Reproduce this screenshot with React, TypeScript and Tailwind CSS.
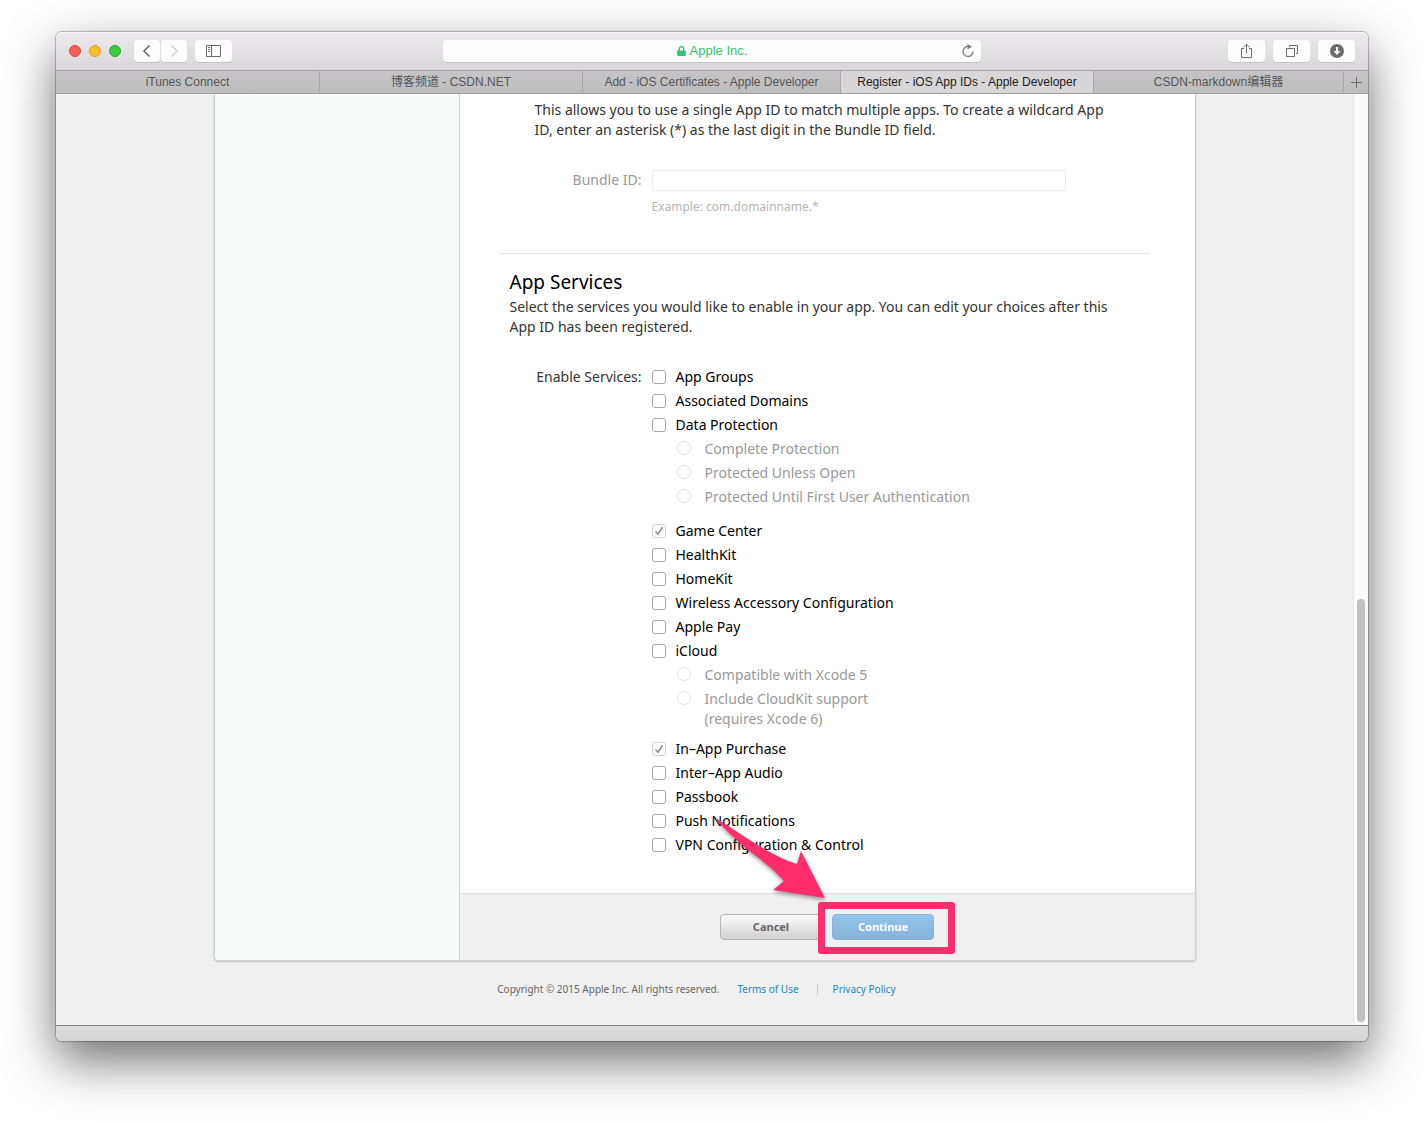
import {ReactNode} from "react";
import {FaLock} from "react-icons/fa";

interface SubOption {
  id: string;
  label: ReactNode;
}

interface Service {
  id: string;
  label: string;
  locked?: boolean;
  options?: SubOption[];
  optionsClass?: string;
}

const tabs = [
  {title: "iTunes Connect", active: false},
  {title: "博客频道 - CSDN.NET", active: false},
  {title: "Add - iOS Certificates - Apple Developer", active: false},
  {title: "Register - iOS App IDs - Apple Developer", active: true},
  {title: "CSDN-markdown编辑器", active: false},
];

const services: Service[] = [
  {id: "groups", label: "App Groups"},
  {id: "domains", label: "Associated Domains"},
  {
    id: "protection",
    label: "Data Protection",
    optionsClass: "pb-2.5",
    options: [
      {id: "complete", label: "Complete Protection"},
      {id: "unless-open", label: "Protected Unless Open"},
      {id: "until-auth", label: "Protected Until First User Authentication"},
    ],
  },
  {id: "game-center", label: "Game Center", locked: true},
  {id: "healthkit", label: "HealthKit"},
  {id: "homekit", label: "HomeKit"},
  {id: "wireless", label: "Wireless Accessory Configuration"},
  {id: "pay", label: "Apple Pay"},
  {
    id: "icloud",
    label: "iCloud",
    optionsClass: "pb-1.5",
    options: [
      {id: "xcode5", label: "Compatible with Xcode 5"},
      {
        id: "cloudkit",
        label: (
          <>
            Include CloudKit support
            <br />
            (requires Xcode 6)
          </>
        ),
      },
    ],
  },
  {id: "iap", label: "In–App Purchase", locked: true},
  {id: "audio", label: "Inter–App Audio"},
  {id: "passbook", label: "Passbook"},
  {id: "push", label: "Push Notifications"},
  {id: "vpn", label: "VPN Configuration & Control"},
];

function ToolbarButton({
  label,
  className,
  children,
}: {
  label: string;
  className: string;
  children: ReactNode;
}) {
  return (
    <button
      aria-label={label}
      className={`flex h-[22px] items-center justify-center rounded bg-[#fdfdfd] text-[#6b6b6b] shadow-[0_1px_0_#c4c3c4] ${className}`}
      type="button"
    >
      {children}
    </button>
  );
}

function Toolbar() {
  return (
    <div className="grid h-[38px] grid-cols-[1fr_minmax(0,538px)_1fr] items-center rounded-t-md border-t border-[#f8f7f8] bg-linear-to-b from-[#ebe9eb] to-[#d9d7d9] pb-px">
      <div className="flex items-center pl-[13px]">
        <div className="flex gap-2">
          <span className="h-3 w-3 rounded-full border border-[#e2463f] bg-[#fc5f57]" />
          <span className="h-3 w-3 rounded-full border border-[#dfa023] bg-[#fdbe2e]" />
          <span className="h-3 w-3 rounded-full border border-[#27a833] bg-[#3ecb40]" />
        </div>
        <ToolbarButton className="ml-[13px] w-[26px]" label="Back">
          <svg fill="none" height="14" stroke="currentColor" strokeWidth="1.6" width="10">
            <path d="M7.5 1.5 2 7l5.5 5.5" />
          </svg>
        </ToolbarButton>
        <ToolbarButton className="ml-px w-[26px]" label="Forward">
          <svg fill="none" height="14" stroke="#cfcfcf" strokeWidth="1.4" width="10">
            <path d="M2.5 1.5 8 7l-5.5 5.5" />
          </svg>
        </ToolbarButton>
        <ToolbarButton className="ml-2 w-[37px]" label="Sidebar">
          <svg fill="none" height="12" stroke="currentColor" width="15">
            <path d="M.5.5h14v11H.5zM5.5.5v11M2 2.5h2M2 4.5h2M2 6.5h2" />
          </svg>
        </ToolbarButton>
      </div>

      <div className="flex h-[22px] items-center rounded bg-[#fdfdfd] pl-5 text-[13px] shadow-[0_1px_0_#c4c3c4]">
        <div className="flex flex-1 items-center justify-center gap-1 text-[#32c36c]">
          <FaLock className="h-[10px] w-[9px]" />
          <span>Apple Inc.</span>
        </div>
        <button aria-label="Reload" className="mr-1.5 text-[#7b7b7b]" type="button">
          <svg fill="none" height="14" width="14">
            <path d="M7.5 2.5A5 5 0 1 0 12 7.5" stroke="currentColor" strokeWidth="1.3" />
            <path d="M6.5 0 11 2.8 6.5 5.5z" fill="currentColor" />
          </svg>
        </button>
      </div>

      <div className="flex items-center justify-end gap-2 pr-[13px]">
        <ToolbarButton className="w-[37px]" label="Share">
          <svg fill="none" height="16" stroke="currentColor" width="13">
            <path d="M4 5.5H1.5v9h10v-9H9M6.5 10.5v-9M3.5 4.3l3-3 3 3" />
          </svg>
        </ToolbarButton>
        <ToolbarButton className="w-[37px]" label="Show all tabs">
          <svg fill="none" height="12" stroke="currentColor" width="12">
            <path d="M.5 3.5h8v8h-8zM3.5 2V.5h8v8H10" />
          </svg>
        </ToolbarButton>
        <ToolbarButton className="w-[37px]" label="Downloads">
          <svg height="14" width="14">
            <circle cx="7" cy="7" fill="currentColor" r="7" />
            <path d="M6 3h2v4h2.5L7 11 3.5 7H6z" fill="#fff" />
          </svg>
        </ToolbarButton>
      </div>
    </div>
  );
}

function TabBar() {
  return (
    <div className="grid h-6 grid-cols-[264fr_263fr_258fr_253fr_250fr_24px] border-y border-[#a3a2a3] bg-linear-to-b from-[#c6c4c6] to-[#bebdbe] text-xs">
      {tabs.map((tab) => (
        <button
          key={tab.title}
          className={`truncate border-r border-[#a9a8a9] ${
            tab.active ? "bg-[#d8d6d8] text-[#1d1d1d]" : "text-[#555]"
          }`}
          type="button"
        >
          {tab.title}
        </button>
      ))}
      <button aria-label="New tab" className="flex items-center justify-center" type="button">
        <svg height="11" stroke="#6f6f6f" width="11">
          <path d="M5.5 0v11M0 5.5h11" />
        </svg>
      </button>
    </div>
  );
}

function ServiceItem({service}: {service: Service}) {
  return (
    <li>
      <label className="flex h-6 items-center gap-2.5">
        <span className="grid">
          <input
            className="col-start-1 row-start-1 h-3.5 w-3.5 appearance-none rounded-[3px] border border-[#a6a6a6] bg-white disabled:border-[#d2d2d2]"
            defaultChecked={service.locked}
            disabled={service.locked}
            type="checkbox"
          />
          {service.locked && (
            <svg
              className="pointer-events-none col-start-1 row-start-1"
              fill="none"
              height="14"
              stroke="#8f8f8f"
              strokeWidth="1.6"
              width="14"
            >
              <path d="M3.5 7.5 6 10.3l4.5-7" />
            </svg>
          )}
        </span>
        <span className="text-black">{service.label}</span>
      </label>
      {service.options && (
        <ul className={`pl-[25px] text-[#999] ${service.optionsClass}`}>
          {service.options.map((option) => (
            <li key={option.id}>
              <label className="flex items-start gap-3.5 py-0.5">
                <input
                  disabled
                  className="mt-0.5 h-3.5 w-3.5 appearance-none rounded-full border border-[#e2e2e2] bg-white"
                  name={service.id}
                  type="radio"
                />
                <span>{option.label}</span>
              </label>
            </li>
          ))}
        </ul>
      )}
    </li>
  );
}

// Pink arrow and frame pointing at the continue button
function Callout() {
  return (
    <div className="pointer-events-none">
      <div className="absolute -top-3 -right-[21px] -bottom-3.5 -left-3.5 rounded-[3px] border-[7px] border-[#ff2d6c]" />
      <svg
        className="absolute -top-[102px] -left-[122px] drop-shadow-[0_2px_2px_rgba(0,0,0,0.4)]"
        fill="#ff2d6c"
        height="92"
        width="120"
      >
        <path d="M4 5C32 22 60 44 87 52L91 39l24 47-52-8 11-9C58 50 28 34 4 5z" />
      </svg>
    </div>
  );
}

export default function App() {
  return (
    <div className="min-h-screen bg-white px-14 pt-8 pb-20 font-['Liberation_Sans','Noto_Sans_CJK_SC',sans-serif]">
      <div className="rounded-md shadow-[0_0_1px_1px_rgba(0,0,0,0.25),0_20px_50px_rgba(0,0,0,0.57)]">
        <Toolbar />
        <TabBar />

        <div className="flex bg-[#f0f0f0] font-['Noto_Sans',sans-serif] text-sm leading-5 text-[#333]">
          <div className="min-w-0 flex-1">
            <div className="mx-auto flex max-w-[982px] rounded-b border border-t-0 border-[#cfcfcf] shadow-[0_1px_2px_rgba(0,0,0,0.2)]">
              <aside className="w-[245px] shrink-0 rounded-bl border-r border-[#cfcfcf] bg-[#f9fbfa]" />
              <main className="min-w-0 flex-1">
                <div className="rounded-br bg-white pt-1.5 pr-[45px] pb-9 pl-10">
                  <section className="border-b border-[#e3e3e3] pb-9">
                    <p className="pr-8 pl-[35px]">
                      This allows you to use a single App ID to match multiple apps. To create a
                      wildcard App ID, enter an asterisk (*) as the last digit in the Bundle ID
                      field.
                    </p>
                    <div className="mt-[30px] flex gap-2.5">
                      <label className="w-[142px] text-right text-[#999]" htmlFor="bundleId">
                        Bundle ID:
                      </label>
                      <div>
                        <input
                          disabled
                          className="block h-[21px] w-[414px] border border-[#ececec] bg-white px-1"
                          id="bundleId"
                          type="text"
                        />
                        <p className="mt-1.5 text-xs leading-5 text-[#b5b5b5]">
                          Example: com.domainname.*
                        </p>
                      </div>
                    </div>
                  </section>

                  <section className="pt-3.5 pl-2.5">
                    <h2 className="text-[19px] leading-[29px] text-black">App Services</h2>
                    <p className="pr-5">
                      Select the services you would like to enable in your app. You can edit your
                      choices after this App ID has been registered.
                    </p>
                    <div className="mt-7 flex gap-2.5">
                      <p className="w-[132px] text-right leading-6">Enable Services:</p>
                      <ul>
                        {services.map((service) => (
                          <ServiceItem key={service.id} service={service} />
                        ))}
                      </ul>
                    </div>
                  </section>
                </div>

                <div className="flex justify-center gap-2.5 rounded-br border-t border-[#e0e0e0] bg-[#f0f0f0] py-5 text-[11px] font-bold">
                  <button
                    className="h-[26px] w-[102px] rounded border border-[#b5b5b5] bg-linear-to-b from-[#fbfbfb] to-[#d2d2d2] text-[#666]"
                    type="button"
                  >
                    Cancel
                  </button>
                  <div className="relative">
                    <button
                      className="h-[26px] w-[102px] rounded border border-[#86b3da] bg-linear-to-b from-[#94c4e9] to-[#86b3da] text-white"
                      type="button"
                    >
                      Continue
                    </button>
                    <Callout />
                  </div>
                </div>
              </main>
            </div>

            <footer className="flex items-center justify-center pt-5 pr-4 pb-7 text-[10px] leading-4 text-[#666]">
              <span>Copyright © 2015 Apple Inc. All rights reserved.</span>
              <a className="ml-[18px] text-[#1d83c8]" href="#terms">
                Terms of Use
              </a>
              <a
                className="ml-[18px] flex items-center text-[#1d83c8] before:mr-[15px] before:h-3 before:w-px before:bg-[#ccc]"
                href="#privacy"
              >
                Privacy Policy
              </a>
            </footer>
          </div>

          <div className="flex w-[15px] flex-col border-l border-[#e6e6e6] bg-[#fafafa] pb-[3px] pl-[3px]">
            <div className="flex-[505]" />
            <div className="w-2 flex-[423] rounded-full bg-[#c1c1c1]" />
          </div>
        </div>

        <div className="h-4 rounded-b-md border-t border-[#808080] bg-linear-to-b from-[#dcdcdc] to-[#d4d4d4]" />
      </div>
    </div>
  );
}
